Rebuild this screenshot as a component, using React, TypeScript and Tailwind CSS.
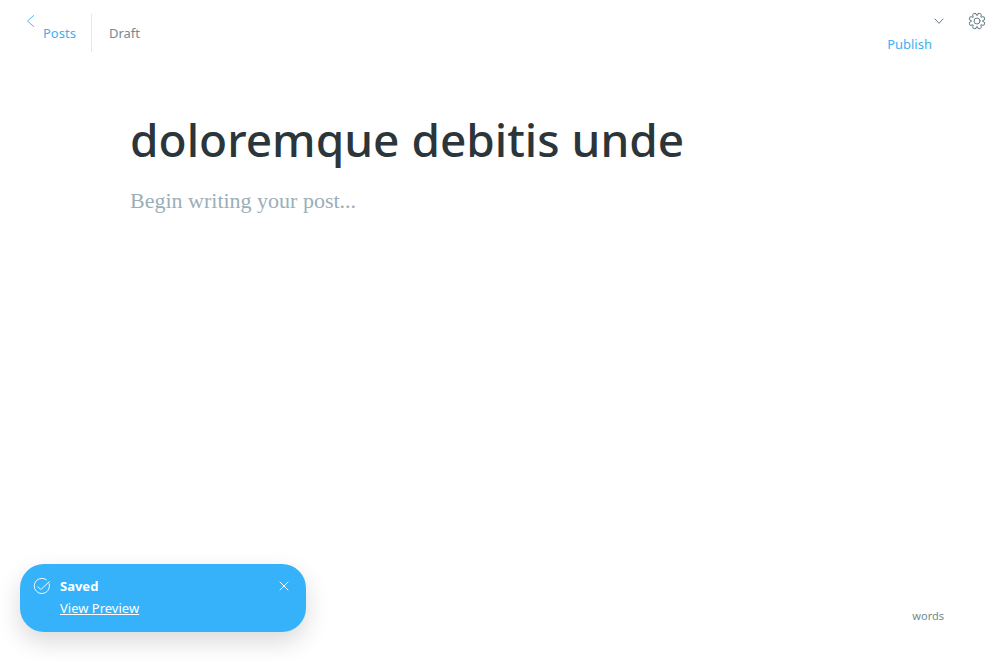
import { useState } from "react";

function ChevronLeft() {
  return (
    <svg viewBox="0 0 8 12" className="h-3 w-2" fill="none" stroke="currentColor" strokeWidth="0.9" strokeLinecap="round" strokeLinejoin="round" aria-hidden="true">
      <path d="M6.700.5.5 6l6.200 5.500" />
    </svg>
  );
}

function ChevronDown() {
  return (
    <svg viewBox="0 0 10 6" className="h-1.5 w-2.5" fill="none" stroke="#5f7d8b" strokeLinecap="round" strokeLinejoin="round" aria-hidden="true">
      <path d="M1 1 5 5.300 9 1" />
    </svg>
  );
}

function Gear() {
  return (
    <svg viewBox="0 0 24 24" className="size-4" fill="none" stroke="currentColor" strokeWidth="1.5" strokeLinecap="round" strokeLinejoin="round" overflow="visible" aria-hidden="true">
      <circle cx="12" cy="12" r="4.5" />
      <path
        transform="rotate(22.5 12 12)"
        d="M9.300 2.200Q9.500 0 11 0h2Q14.500 0 14.700 2.200Q14.600 5.700 17 3.200Q18.800 1.900 19.800 2.800L21.200 4.200Q22.100 5.200 20.800 7Q18.300 9.400 21.800 9.300Q24 9.500 24 11v2Q24 14.500 21.800 14.700Q18.300 14.600 20.800 17Q22.100 18.800 21.200 19.800L19.800 21.200Q18.800 22.100 17 20.800Q14.600 18.300 14.700 21.800Q14.500 24 13 24h-2Q9.500 24 9.300 21.800Q9.400 18.300 7 20.800Q5.200 22.100 4.200 21.200L2.800 19.800Q1.900 18.800 3.200 17Q5.700 14.600 2.200 14.700Q0 14.500 0 13v-2Q0 9.500 2.200 9.300Q5.700 9.400 3.200 7Q1.900 5.200 2.800 4.200L4.200 2.800Q5.200 1.900 7 3.200Q9.400 5.700 9.300 2.200z"
      />
    </svg>
  );
}

function CheckCircle() {
  return (
    <svg viewBox="0 0 24 24" className="size-4" fill="none" stroke="white" strokeWidth="1.4" strokeLinecap="round" strokeLinejoin="round" overflow="visible" aria-hidden="true">
      <path d="M6 13.200l3.500 3.500a1 1 0 0 0 1.500-.1L23 5.500" />
      <path d="M22.800 8.700A11.400 11.400 0 1 1 18.500 2.600" />
    </svg>
  );
}

function Header() {
  return (
    <header className="flex items-start justify-between pt-3.5 pr-[15px] pl-[27px] text-[13px] leading-5">
      <nav className="flex items-stretch">
        <a href="#posts" className="flex items-start pr-[15px] text-[#3eb0ef]">
          <span className="pt-px"><ChevronLeft /></span>
          <span className="pt-[9px] pl-2">Posts</span>
        </a>
        <span className="h-[38px] border-l border-[#dfe9ef] pt-[9px] pl-[17px] text-[#738a94]">Draft</span>
      </nav>
      <div className="flex items-start gap-[25px]">
        <button type="button" className="flex flex-col items-end pt-1 text-[#3eb0ef]">
          <ChevronDown />
          <span className="mt-2.5 mr-3">Publish</span>
        </button>
        <button type="button" aria-label="Settings" className="flex -mt-px text-[#667d87]">
          <Gear />
        </button>
      </div>
    </header>
  );
}

function SavedNotice({ onClose }: { onClose: () => void }) {
  return (
    <aside role="status" className="flex h-[68px] w-[286px] items-start rounded-3xl bg-[#35b2f9] pt-3.5 pr-[17px] pl-3.5 text-[13px] text-white shadow-[0_10px_24px_rgba(0,0,0,0.15)]">
      <CheckCircle />
      <div className="ml-2.5 flex grow flex-col items-start gap-1 leading-[18px]">
        <strong className="-mt-px font-bold">Saved</strong>
        <a href="#preview" className="underline">View Preview</a>
      </div>
      <button type="button" aria-label="Close" onClick={onClose} className="flex pt-[3px]">
        <svg viewBox="0 0 10 10" className="size-2.5" stroke="white" strokeLinecap="round" aria-hidden="true">
          <path d="M1 1l8 8M9 1L1 9" />
        </svg>
      </button>
    </aside>
  );
}

export default function App() {
  const [title, setTitle] = useState("doloremque debitis unde");
  const [open, setOpen] = useState(true);

  return (
    <div className="flex min-h-screen flex-col bg-white font-['Noto_Sans',sans-serif]">
      <Header />
      <main className="flex w-full grow flex-col px-[13%] pt-[55px]">
        <textarea
          aria-label="Post title"
          rows={1}
          value={title}
          onChange={(e) => setTitle(e.target.value)}
          className="h-[60px] w-full resize-none overflow-hidden text-[46px] leading-[60px] font-medium text-[#2b353a] outline-none"
        />
        <textarea
          aria-label="Post content"
          placeholder="Begin writing your post..."
          className="mt-4 w-full grow resize-none font-['Liberation_Serif',serif] text-[22px] leading-8 outline-none placeholder:text-[#9baeb8]"
        />
      </main>
      <footer className="flex h-24 items-start justify-between pr-14 pl-5">
        {open ? <SavedNotice onClose={() => setOpen(false)} /> : <span />}
        <span className="pt-11 text-[11px] leading-4 text-[#738a94]">words</span>
      </footer>
    </div>
  );
}
